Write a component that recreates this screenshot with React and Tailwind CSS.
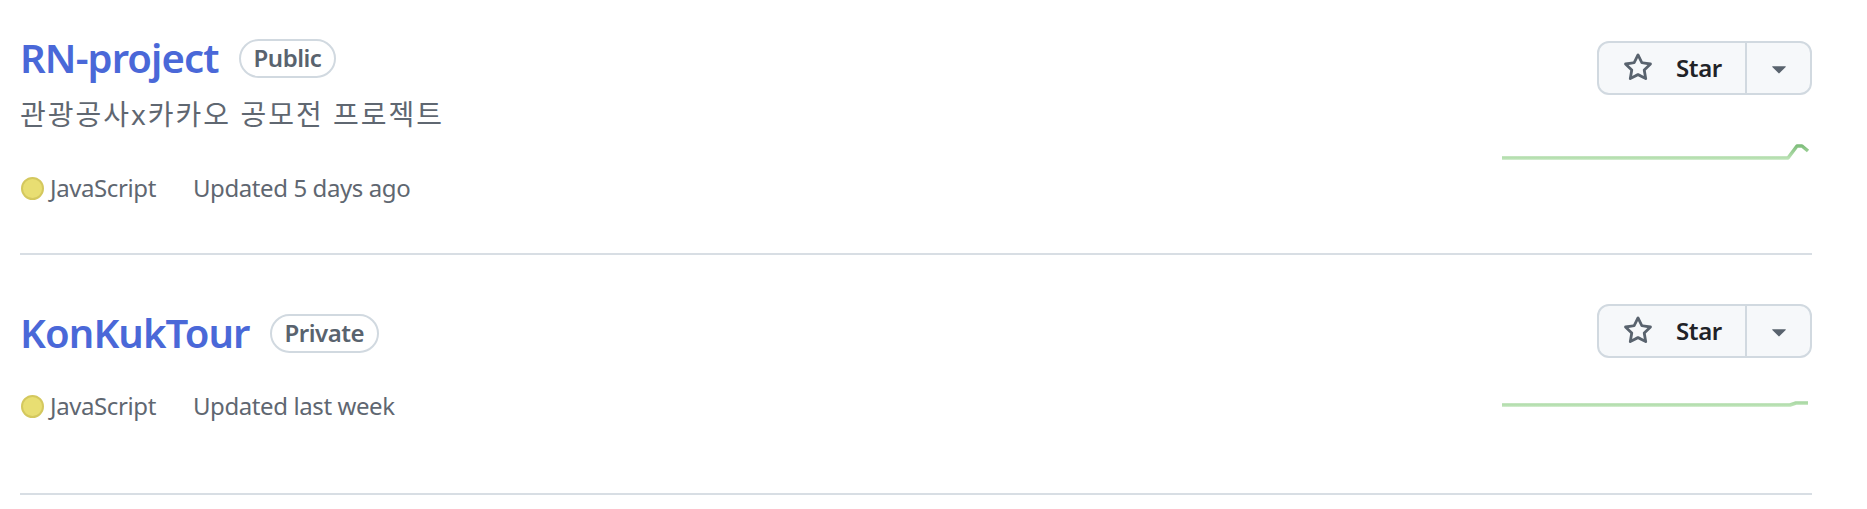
import React from "react";

const repos = [
  {
    name: "RN-project",
    visibility: "Public",
    description: "관광공사x카카오 공모전 프로젝트",
    language: "JavaScript",
    updated: "Updated 5 days ago",
    rowClass: "h-[255px]",
    leftClass: "pt-[28px]",
    metaClass: "mt-[35px]",
    rightClass: "pt-[41px]",
    sparkClass: "mt-[40px]",
    spark: "M0 23 L286 23 L295 11 L300 11 L306 16",
    gradTop: 8,
    gradBottom: 26,
  },
  {
    name: "KonKukTour",
    visibility: "Private",
    description: null,
    language: "JavaScript",
    updated: "Updated last week",
    rowClass: "h-[240px]",
    leftClass: "pt-[48px]",
    metaClass: "mt-[25px]",
    rightClass: "pt-[49px]",
    sparkClass: "mt-[32px]",
    spark: "M0 15 L288 15 L294 13 L306 13",
    gradTop: 0,
    gradBottom: 18,
  },
];

const StarIcon = () => (
  <svg width="30" height="30" viewBox="0 0 16 16" fill="#59636e">
    <path d="M8 .25a.75.75 0 0 1 .673.418l1.882 3.815 4.21.612a.75.75 0 0 1 .416 1.279l-3.046 2.97.719 4.192a.751.751 0 0 1-1.088.791L8 12.347l-3.766 1.98a.75.75 0 0 1-1.088-.79l.72-4.194L.818 6.374a.75.75 0 0 1 .416-1.28l4.21-.611L7.327.668A.75.75 0 0 1 8 .25Zm0 2.445L6.615 5.5a.75.75 0 0 1-.564.41l-3.097.45 2.24 2.184a.75.75 0 0 1 .216.664l-.528 3.084 2.769-1.456a.75.75 0 0 1 .698 0l2.77 1.456-.53-3.084a.75.75 0 0 1 .216-.664l2.24-2.183-3.096-.45a.75.75 0 0 1-.564-.41L8 2.694Z" />
  </svg>
);

const CaretIcon = () => (
  <svg width="30" height="30" viewBox="0 0 16 16" fill="#59636e">
    <path d="m4.427 7.427 3.396 3.396a.25.25 0 0 0 .354 0l3.396-3.396A.25.25 0 0 0 11.396 7H4.604a.25.25 0 0 0-.177.427Z" />
  </svg>
);

const Sparkline = ({ d, id, top, bottom }) => (
  <svg width="310" height="30" viewBox="0 0 310 30">
    <defs>
      <linearGradient id={id} x1="0" y1={bottom} x2="0" y2={top} gradientUnits="userSpaceOnUse">
        <stop offset="0%" stopColor="#c6e8c1" />
        <stop offset="25%" stopColor="#b0dcaa" />
        <stop offset="100%" stopColor="#74b771" />
      </linearGradient>
    </defs>
    <path d={d} fill="none" stroke={`url(#${id})`} strokeWidth="3.5" strokeLinejoin="round" strokeLinecap="butt" />
  </svg>
);

const RepoRow = ({ repo, index }) => (
  <div className={`flex justify-between items-start border-b-2 border-[#d8dee4] ${repo.rowClass}`}>
    <div className={repo.leftClass}>
      <div className="flex items-center h-[60px]">
        <span className="text-[40px] leading-[60px] font-semibold tracking-[-0.9px] text-[#4a68d8]">{repo.name}</span>
        <span className="ml-[20px] h-[39px] px-[13px] flex items-center rounded-full border-2 border-[#d1d9e0] text-[24px] font-semibold tracking-[-0.5px] text-[#59636e]">
          {repo.visibility}
        </span>
      </div>
      {repo.description && (
        <p className="mt-[5px] text-[28px] leading-[42px] tracking-[2px] text-[#5f6771]">{repo.description}</p>
      )}
      <div className={`flex items-center h-[36px] text-[24px] leading-[36px] tracking-[-0.4px] text-[#5f6771] ${repo.metaClass}`}>
        <span className="w-[23px] h-[23px] rounded-full bg-[#e8de72] border-2 border-[#d4c85e] ml-[1px]" />
        <span className="ml-[6px]">{repo.language}</span>
        <span className="ml-[37px]">{repo.updated}</span>
      </div>
    </div>
    <div className={`flex flex-col items-end w-[310px] ${repo.rightClass}`}>
      <div className="flex h-[54px] w-[215px] rounded-[12px] border-2 border-[#d1d9e0] bg-[#f6f8fa]">
        <div className="flex items-center w-[146px] pl-[24px]">
          <StarIcon />
          <span className="ml-[23px] text-[24px] font-semibold tracking-[-0.4px] text-[#1f2328]">Star</span>
        </div>
        <div className="flex flex-1 items-center justify-center border-l-2 border-[#d1d9e0]">
          <CaretIcon />
        </div>
      </div>
      <div className={repo.sparkClass}>
        <Sparkline d={repo.spark} id={`spark-${index}`} top={repo.gradTop} bottom={repo.gradBottom} />
      </div>
    </div>
  </div>
);

export default function App() {
  return (
    <div className="w-[1867px] h-[509px] overflow-hidden bg-white font-['Noto_Sans','Noto_Sans_CJK_KR',sans-serif]">
      <div className="ml-[20px] w-[1792px]">
        {repos.map((repo, i) => (
          <RepoRow key={repo.name} repo={repo} index={i} />
        ))}
      </div>
    </div>
  );
}
